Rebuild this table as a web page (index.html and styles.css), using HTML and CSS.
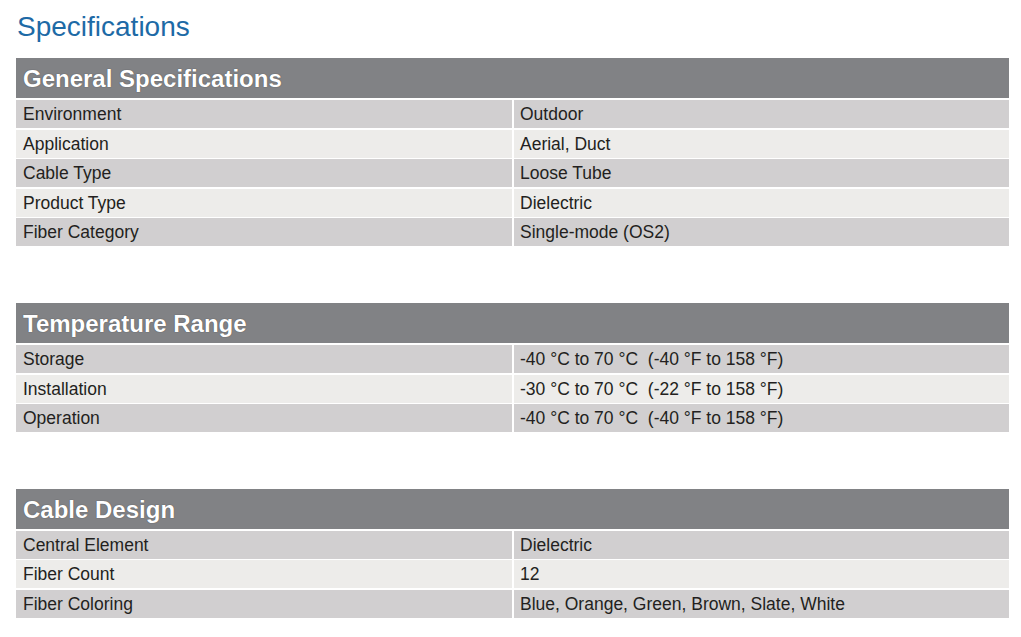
FILE: index.html
```html
<!DOCTYPE html>
<html>
<head>
<meta charset="utf-8">
<link rel="stylesheet" href="styles.css">
</head>
<body>
<h1 class="title">Specifications</h1>

<section class="spec">
  <div class="spec-head">General Specifications</div>
  <div class="row dark"><div class="cell">Environment</div><div class="cell">Outdoor</div></div>
  <div class="row light"><div class="cell">Application</div><div class="cell">Aerial, Duct</div></div>
  <div class="row dark"><div class="cell">Cable Type</div><div class="cell">Loose Tube</div></div>
  <div class="row light"><div class="cell">Product Type</div><div class="cell">Dielectric</div></div>
  <div class="row dark"><div class="cell">Fiber Category</div><div class="cell">Single-mode (OS2)</div></div>
</section>

<section class="spec">
  <div class="spec-head">Temperature Range</div>
  <div class="row dark"><div class="cell">Storage</div><div class="cell">-40 °C to 70 °C&nbsp; (-40 °F to 158 °F)</div></div>
  <div class="row light"><div class="cell">Installation</div><div class="cell">-30 °C to 70 °C&nbsp; (-22 °F to 158 °F)</div></div>
  <div class="row dark"><div class="cell">Operation</div><div class="cell">-40 °C to 70 °C&nbsp; (-40 °F to 158 °F)</div></div>
</section>

<section class="spec">
  <div class="spec-head">Cable Design</div>
  <div class="row dark"><div class="cell">Central Element</div><div class="cell">Dielectric</div></div>
  <div class="row light"><div class="cell">Fiber Count</div><div class="cell">12</div></div>
  <div class="row dark"><div class="cell">Fiber Coloring</div><div class="cell">Blue, Orange, Green, Brown, Slate, White</div></div>
</section>
</body>
</html>
```

FILE: styles.css
```css
html, body {
  margin: 0;
  padding: 0;
  background: #ffffff;
}
body {
  font-family: "Liberation Sans", Arial, sans-serif;
  padding: 0 12px 0 16px;
  color: #231f20;
}
.title {
  margin: 0;
  padding: 11px 0 0 1px;
  height: 58px;
  box-sizing: border-box;
  font-size: 28px;
  font-weight: normal;
  line-height: 32px;
  color: #1d6aa6;
}
.spec {
  display: flex;
  flex-direction: column;
  gap: 2px;
  margin-bottom: 57px;
}
.spec:last-child {
  margin-bottom: 0;
}
.spec-head {
  height: 40px;
  background: #818285;
  color: #ffffff;
  font-weight: bold;
  font-size: 24px;
  line-height: 41px;
  padding-left: 7px;
  text-shadow: 0 0 1px #3a3a3c;
}
.row {
  display: grid;
  grid-template-columns: 496px 1fr;
  column-gap: 2px;
  height: 27.6px;
}
.cell {
  font-size: 17.5px;
  line-height: 28px;
  padding-left: 6px;
  white-space: nowrap;
}
.row .cell:first-child { padding-left: 7px; }
.dark .cell { background: #d1cfd0; }
.light .cell { background: #edecea; }
```
